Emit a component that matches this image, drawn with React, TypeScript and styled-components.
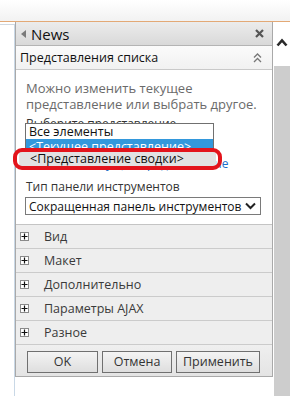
import React from "react";
import styled, { createGlobalStyle } from "styled-components";

const Global = createGlobalStyle`
  html, body { margin: 0; padding: 0; background: #ffffff; }
  body { font-family: "Open Sans", "Noto Sans", sans-serif; }
  * { box-sizing: border-box; }
`;

const Page = styled.div`
  width: 290px;
  height: 396px;
  overflow: hidden;
  background: #ffffff;
  display: flex;
  flex-direction: column;
`;

const TopBar = styled.div`
  height: 22px;
  flex: none;
  background: linear-gradient(#ffffff, #f2f2f2);
  border-bottom: 1px solid #e3a976;
`;

const Body = styled.div`
  flex: 1;
  display: flex;
  min-height: 0;
`;

const LeftStrip = styled.div`
  width: 15px;
  flex: none;
  border-right: 1px solid #c9d8e6;
  border-top: 1px solid #d0d8e0;
  margin-top: 2px;
  background: #ffffff;
`;

const PanelCol = styled.div`
  width: 258px;
  flex: none;
  display: flex;
  flex-direction: column;
`;

const Panel = styled.div`
  border-left: 1px solid #a9a9a9;
  border-right: 1px solid #a9a9a9;
  border-bottom: 1px solid #a9a9a9;
  display: flex;
  flex-direction: column;
`;

const Header = styled.div`
  height: 24px;
  display: flex;
  align-items: center;
  padding: 0 8px 0 5px;
  background: linear-gradient(#ececec, #d9d9d9);
  border-bottom: 1px solid #b4b4b4;
`;

const HeaderTitle = styled.span`
  flex: 1;
  margin-left: 5px;
  font-size: 15px;
  color: #111;
`;

const SubHeader = styled.div`
  height: 24px;
  display: flex;
  align-items: center;
  padding: 0 10px 0 4px;
  background: linear-gradient(#fbfbfb, #f1f1f1);
  border-bottom: 1px solid #c9c9c9;
  font-size: 12.5px;
  color: #111;
`;

const SubTitle = styled.span`
  flex: 1;
`;

const Content = styled.div`
  position: relative;
  padding: 10px 10px 9px 10px;
  background: #ffffff;
  display: flex;
  flex-direction: column;
  border-bottom: 1px solid #c4c4c4;
`;

const Desc = styled.div`
  font-size: 13px;
  line-height: 16px;
  color: #6a6a6a;
`;

const Label = styled.div<{ $mt: number }>`
  margin-top: ${(p) => p.$mt}px;
  font-size: 12px;
  line-height: 16px;
  color: #333;
  white-space: nowrap;
`;

const SelectBox = styled.div<{ $mt: number; $w: number }>`
  margin-top: ${(p) => p.$mt}px;
  height: 18px;
  width: ${(p) => p.$w}px;
  margin-left: -1px;
  border: 1px solid #7a7a7a;
  background: #fff;
  display: flex;
  align-items: center;
  padding: 0 4px 0 3px;
  font-size: 12px;
  color: #111;
`;

const SelectText = styled.span`
  flex: 1;
  white-space: nowrap;
  overflow: hidden;
`;

const Link = styled.div`
  margin-top: 6px;
  font-size: 12px;
  line-height: 16px;
  color: #1a6fc9;
  white-space: nowrap;
`;

const ListBox = styled.div`
  position: absolute;
  left: 9px;
  top: 53px;
  width: 189px;
  height: 27px;
  border: 1px solid #707070;
  background: #fff;
  overflow: hidden;
`;

const ListRow = styled.div<{ $active?: boolean }>`
  height: 15px;
  line-height: 15px;
  padding-left: 3px;
  font-size: 12.5px;
  white-space: nowrap;
  color: ${(p) => (p.$active ? "#fff" : "#111")};
  background: ${(p) => (p.$active ? "#3398dc" : "#fff")};
`;

const HoverRow = styled.div`
  position: absolute;
  left: 3px;
  top: 81px;
  width: 197px;
  height: 16px;
  line-height: 16px;
  padding-left: 11px;
  background: #e2e2e2;
  font-size: 12.5px;
  color: #111;
  white-space: nowrap;
`;

const RedRing = styled.div`
  position: absolute;
  left: -3px;
  top: 78px;
  width: 209px;
  height: 22px;
  border: 4px solid #e3141c;
  border-radius: 9px;
`;

const Section = styled.div`
  height: 24px;
  display: flex;
  align-items: center;
  padding-left: 4px;
  background: #eeeeee;
  border-bottom: 1px solid #cbcbcb;
  font-size: 12.5px;
  color: #3a3a3a;
`;

const PlusBox = styled.span`
  width: 9px;
  height: 9px;
  border: 1px solid #8a8a8a;
  background: #fff;
  display: flex;
  align-items: center;
  justify-content: center;
  margin-right: 15px;
  flex: none;
`;

const ButtonBar = styled.div`
  height: 31px;
  display: flex;
  align-items: center;
  gap: 4px;
  padding: 2px 0 0 11px;
  background: linear-gradient(#efefef, #e4e4e4);
`;

const Button = styled.button<{ $w: number }>`
  width: ${(p) => p.$w}px;
  height: 22px;
  border: 1px solid #707070;
  background: linear-gradient(#f4f4f4, #dedede);
  font-family: "Open Sans", "Noto Sans", sans-serif;
  font-size: 12.5px;
  color: #333;
  padding: 0;
`;

const Scroll = styled.div`
  width: 17px;
  flex: none;
  display: flex;
  flex-direction: column;
`;

const ScrollArrow = styled.div`
  height: 44px;
  display: flex;
  justify-content: center;
  padding-top: 16px;
`;

const ScrollThumb = styled.div`
  flex: 1;
  background: #cdcdcd;
  margin-left: 1px;
`;

const Tri = () => (
  <svg width="5" height="8" viewBox="0 0 5 8">
    <path d="M5 0 L0 4 L5 8 Z" fill="#7a7a7a" />
  </svg>
);

const CloseX = () => (
  <svg width="9" height="9" viewBox="0 0 9 9">
    <path d="M1 1 L8 8 M8 1 L1 8" stroke="#555" strokeWidth="2.2" />
  </svg>
);

const DoubleUp = () => (
  <svg width="9" height="10" viewBox="0 0 9 10">
    <path d="M1 4.5 L4.5 1 L8 4.5 M1 9 L4.5 5.5 L8 9" stroke="#777" strokeWidth="1.3" fill="none" />
  </svg>
);

const Chevron = () => (
  <svg width="11" height="8" viewBox="0 0 11 8">
    <path d="M1 1.5 L5.5 6 L10 1.5" stroke="#222" strokeWidth="2" fill="none" />
  </svg>
);

const Plus = () => (
  <svg width="7" height="7" viewBox="0 0 7 7">
    <path d="M3.5 0.5 V6.5 M0.5 3.5 H6.5" stroke="#111" strokeWidth="1.2" />
  </svg>
);

const UpArrow = () => (
  <svg width="12" height="9" viewBox="0 0 12 9">
    <path d="M1.5 7.5 L6 2.5 L10.5 7.5" stroke="#2a2a2a" strokeWidth="2.6" fill="none" />
  </svg>
);

const sections = ["Вид", "Макет", "Дополнительно", "Параметры AJAX", "Разное"];

export default function App() {
  return (
    <Page>
      <Global />
      <TopBar />
      <Body>
        <LeftStrip />
        <PanelCol>
          <Panel>
            <Header>
              <Tri />
              <HeaderTitle>News</HeaderTitle>
              <CloseX />
            </Header>
            <SubHeader>
              <SubTitle>Представления списка</SubTitle>
              <DoubleUp />
            </SubHeader>
            <Content>
              <Desc>
                Можно изменить текущее
                <br />
                представление или выбрать другое.
              </Desc>
              <Label $mt={4}>Выберите представление</Label>
              <SelectBox $mt={0} $w={189}>
                <SelectText>&lt;Текущее представление&gt;</SelectText>
              </SelectBox>
              <Link>Изменить текущее представление</Link>
              <Label $mt={7}>Тип панели инструментов</Label>
              <SelectBox $mt={2} $w={236}>
                <SelectText>Сокращенная панель инструментов</SelectText>
                <Chevron />
              </SelectBox>
              <ListBox>
                <ListRow>Все элементы</ListRow>
                <ListRow $active>&lt;Текущее представление&gt;</ListRow>
              </ListBox>
              <HoverRow>&lt;Представление сводки&gt;</HoverRow>
              <RedRing />
            </Content>
            {sections.map((s) => (
              <Section key={s}>
                <PlusBox>
                  <Plus />
                </PlusBox>
                {s}
              </Section>
            ))}
            <ButtonBar>
              <Button $w={71}>OK</Button>
              <Button $w={70}>Отмена</Button>
              <Button $w={84}>Применить</Button>
            </ButtonBar>
          </Panel>
        </PanelCol>
        <Scroll>
          <ScrollArrow>
            <UpArrow />
          </ScrollArrow>
          <ScrollThumb />
        </Scroll>
      </Body>
    </Page>
  );
}
